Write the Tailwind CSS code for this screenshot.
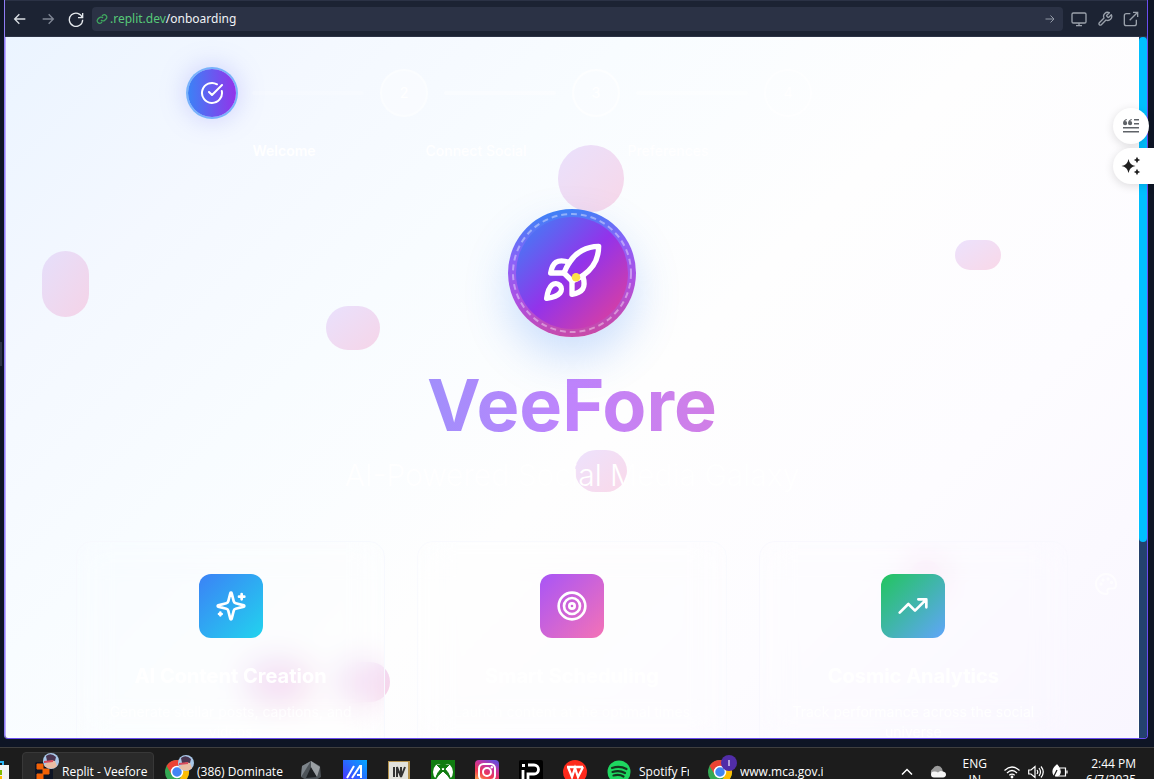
<!DOCTYPE html>
<html lang="en">
<head>
<meta charset="utf-8">
<title>VeeFore Onboarding</title>
<script src="https://cdn.jsdelivr.net/npm/@tailwindcss/browser@4"></script>
</head>
<body class="flex h-screen flex-col overflow-hidden bg-[#0e1525] font-['Inter',sans-serif]">
<div class="relative flex min-h-0 flex-1 pr-[6px] pb-2 pl-1">
  <div class="absolute top-[342px] left-0 h-6 w-[2px] bg-[#2b3245]"></div>
  <div class="flex min-w-0 flex-1 flex-col overflow-hidden rounded-b border-x border-b border-[#6a4df0] border-l-[#8f7cf5]">
    <header class="flex h-[37px] shrink-0 items-center border-t border-b border-[#2b3245] bg-[#1c2333] pr-2 pl-[7px] text-[#c2c8cc]">
      <button aria-label="Back" class="mr-3 flex size-4 items-center justify-center text-[#d8dde2]"><svg class="size-4" viewBox="0 0 24 24" fill="none" stroke="currentColor" stroke-width="2"><path d="M20 12H4m7-7-7 7 7 7"/></svg></button>
      <button aria-label="Forward" class="mr-3 flex size-4 items-center justify-center text-[#7f8694]"><svg class="size-4" viewBox="0 0 24 24" fill="none" stroke="currentColor" stroke-width="2"><path d="M4 12h16m-7-7 7 7-7 7"/></svg></button>
      <button aria-label="Reload" class="mr-2 flex size-4 items-center justify-center text-[#e4e8ec]"><svg class="size-4" viewBox="0 0 24 24" fill="none" stroke="currentColor" stroke-width="2"><path d="M22 3v7h-7M21.5 10A10 10 0 1 0 22 13"/></svg></button>
      <div class="flex h-6 min-w-0 flex-1 items-center rounded bg-[#2b3245] px-1 font-['Noto_Sans',sans-serif] text-xs">
        <svg class="mr-[2px] size-3 text-[#3fa85f]" viewBox="0 0 24 24" fill="none" stroke="currentColor" stroke-width="2.5"><path d="M10 14a5 5 0 0 0 7.500.5l3-3a5 5 0 0 0-7-7L12 6M14 10a5 5 0 0 0-7.500-.5l-3 3a5 5 0 0 0 7 7L12 18"/></svg>
        <span class="text-[#57c878]">.replit.dev</span><span class="text-[#f0f3f5]">/onboarding</span>
        <button aria-label="Go" class="mr-[3px] ml-auto text-[#9299a6]"><svg class="size-3" viewBox="0 0 24 24" fill="none" stroke="currentColor" stroke-width="2"><path d="M3 12h17m-7-7 7 7-7 7"/></svg></button>
      </div>
      <div class="ml-2 flex gap-[10px] text-[#9aa1ab]">
        <button aria-label="Device preview"><svg class="size-4" viewBox="0 0 24 24" fill="none" stroke="currentColor" stroke-width="2"><rect x="1.500" y="3" width="21" height="15" rx="2"/><path d="M12 18v4M7.500 22h9"/></svg></button>
        <button aria-label="Developer tools"><svg class="size-4" viewBox="0 0 24 24" fill="none" stroke="currentColor" stroke-width="2" stroke-linejoin="round"><path d="M14.700 6.300a1 1 0 0 0 0 1.400l1.600 1.600a1 1 0 0 0 1.400 0l3.800-3.800a6 6 0 0 1-8 8l-7 7a2.100 2.100 0 0 1-3-3l7-7a6 6 0 0 1 8-8z"/></svg></button>
        <button aria-label="Open in new tab"><svg class="size-4" viewBox="0 0 24 24" fill="none" stroke="currentColor" stroke-width="2"><path d="M20 13v6a3 3 0 0 1-3 3H5a3 3 0 0 1-3-3V7a3 3 0 0 1 3-3h6M15 2h7v7M22 2 10 14"/></svg></button>
      </div>
    </header>

    <div class="flex min-h-0 flex-1">
      <main class="relative min-w-0 flex-1 overflow-hidden border-x border-l-[#b9adff] border-r-white bg-[linear-gradient(135deg,#ebf4ff_0%,#f4f8ff_18%,#f8fcff_34%,#fefefe_54%,#fdfcff_75%,#f9f6ff_100%)]">
        <!-- floating decorations -->
        <div class="absolute top-[108px] left-[552px] h-[67px] w-[66px] rounded-full bg-linear-to-br from-[#e9e1fd] to-[#f8d7e8]"></div>
        <div class="absolute top-[214px] left-[36px] h-[66px] w-[47px] rounded-full bg-linear-to-br from-[#e5dffb] to-[#f5d3e7]"></div>
        <div class="absolute top-[269px] left-[320px] h-[44px] w-[54px] rounded-full bg-linear-to-br from-[#e9e1fd] to-[#f6d5e8]"></div>
        <div class="absolute top-[203px] left-[949px] h-[30px] w-[46px] rounded-full bg-linear-to-br from-[#ece2fd] to-[#f9d8e8]"></div>
        <div class="absolute top-[413px] left-[569px] h-[42px] w-[52px] rounded-full bg-linear-to-br from-[#ede2fd] to-[#fad9e9]"></div>
        <div class="absolute top-[624px] left-[239px] h-[42px] w-[66px] rounded-full bg-linear-to-br from-[#ece0fc] to-[#f8d4e8]"></div>
        <div class="absolute top-[625px] left-[332px] h-[40px] w-[52px] rounded-full bg-linear-to-br from-[#ece0fc] to-[#f8d4e8]"></div>
        <div class="absolute top-[523px] left-[904px] size-8 rounded-full bg-linear-to-br from-[#f6e6fc] to-[#fbdcec]"></div>
        <svg class="absolute top-[535px] left-[1088px] size-6 text-white/70" viewBox="0 0 24 24" fill="none" stroke="currentColor" stroke-width="2"><path d="M12 2a10 10 0 0 0 0 20c1.500 0 2-1 1.600-2-.8-1.700.2-3.500 2-3.500H19c2 0 3-1.800 3-4C22 6.500 17.500 2 12 2z"/><circle cx="7" cy="12" r=".7"/><circle cx="9" cy="8" r=".7"/><circle cx="14" cy="7" r=".7"/><circle cx="17.500" cy="10.500" r=".7"/></svg>

        <div class="relative pt-8">
          <ol class="mx-auto grid max-w-3xl grid-cols-4 text-center text-sm font-medium text-white">
            <li>
              <div class="flex items-center gap-4">
                <span class="flex size-12 shrink-0 items-center justify-center rounded-full bg-linear-to-r/srgb from-[#3b82f6] to-[#9333ea] shadow-[0_0_28px_#7a80f866] ring-2 ring-[#78b2fb]"><svg class="size-6" viewBox="0 0 24 24" fill="none" stroke="currentColor" stroke-width="2" stroke-linecap="round" stroke-linejoin="round"><path d="M21.800 10A10 10 0 1 1 17 3.300M9 11l3 3L22 4"/></svg></span>
                <span class="mr-4 h-1 flex-1 rounded-full bg-white/20"></span>
              </div>
              <p class="mt-6 leading-5 font-semibold">Welcome</p>
            </li>
            <li>
              <div class="flex items-center gap-4">
                <span class="flex size-12 shrink-0 items-center justify-center rounded-full border-2 border-white/40 bg-white/30">2</span>
                <span class="mr-4 h-1 flex-1 rounded-full bg-white/40"></span>
              </div>
              <p class="mt-6 leading-5">Connect Social</p>
            </li>
            <li>
              <div class="flex items-center gap-4">
                <span class="flex size-12 shrink-0 items-center justify-center rounded-full border-2 border-white/60 bg-white/20">3</span>
                <span class="mr-4 h-1 flex-1 rounded-full bg-white/40"></span>
              </div>
              <p class="mt-6 leading-5">Preferences</p>
            </li>
            <li>
              <span class="flex size-12 items-center justify-center rounded-full border-2 border-white/60">4</span>
            </li>
          </ol>

          <section class="mx-auto mt-12 max-w-4xl text-center">
            <div class="relative mx-auto flex size-32 items-center justify-center rounded-full bg-[linear-gradient(170deg,#3b82f6_6%,#8b62f8_35%,#ac50e2_62%,#c94aa6_94%)] shadow-[0_20px_44px_#3b82f640]">
              <svg class="absolute inset-0 size-32" viewBox="0 0 128 128" fill="none"><defs><linearGradient id="core" x1="0" y1="0" x2="1" y2="1"><stop offset="0.05" stop-color="#3f80f6"/><stop offset="0.5" stop-color="#9333ea"/><stop offset="0.95" stop-color="#e0409a"/></linearGradient></defs><circle cx="64" cy="64" r="56" fill="url(#core)"/><circle cx="64" cy="64" r="59" stroke="#fff" stroke-opacity=".4" stroke-width="2" stroke-dasharray="5.900 3.980"/></svg>
              <svg class="relative size-16 text-white" viewBox="0 0 24 24" fill="none" stroke="currentColor" stroke-width="2" stroke-linecap="round" stroke-linejoin="round"><path d="M4.500 16.500c-1.500 1.260-2 5-2 5s3.740-.5 5-2c.71-.84.7-2.130-.09-2.910a2.180 2.180 0 0 0-2.910-.09z"/><path d="m12 15-3-3a22 22 0 0 1 2-3.950A12.880 12.880 0 0 1 22 2c0 2.720-.78 7.500-6 11a22.350 22.350 0 0 1-4 2z"/><path d="M9 12H4s.55-3.030 2-4c1.620-1.080 5 0 5 0"/><path d="M12 15v5s3.030-.55 4-2c1.080-1.620 0-5 0-5"/><circle cx="13.500" cy="13.600" r="1.600" fill="#fde047" stroke="none"/></svg>
            </div>
            <h1 class="mt-8 bg-linear-to-r/srgb from-[#60a5fa] via-[#c084fc] to-[#f472b6] bg-clip-text text-7xl font-bold text-transparent">VeeFore</h1>
            <p class="mt-4 text-3xl font-light text-white">AI-Powered Social Media Galaxy</p>
          </section>

          <section class="mx-auto mt-12 grid max-w-[1024px] grid-cols-3 gap-8 px-4 text-center text-white">
            <article class="h-80 rounded-2xl border border-[#f7f9fe] bg-white/10 p-8 backdrop-blur-lg">
              <div class="mx-auto flex size-16 items-center justify-center rounded-xl bg-linear-to-br/srgb from-[#3b82f6] to-[#22d3ee]"><svg class="size-8" viewBox="0 0 24 24" fill="none" stroke="currentColor" stroke-width="2" stroke-linecap="round" stroke-linejoin="round"><path d="M9.940 15.500A2 2 0 0 0 8.500 14.060l-6.140-1.580a.5.5 0 0 1 0-.96L8.500 9.940A2 2 0 0 0 9.940 8.500l1.580-6.140a.5.5 0 0 1 .96 0l1.580 6.140a2 2 0 0 0 1.440 1.440l6.140 1.580a.5.5 0 0 1 0 .96l-6.140 1.580a2 2 0 0 0-1.440 1.440l-1.580 6.140a.5.5 0 0 1-.96 0z"/><path d="M20 3v4M22 5h-4M4 17v2M5 18H3"/></svg></div>
              <h2 class="mt-6 text-xl font-bold">AI Content Creation</h2>
              <p class="mt-3 text-sm text-white/80">Generate stellar posts, captions, and videos</p>
            </article>
            <article class="h-80 rounded-2xl border border-[#f9fafe] bg-white/10 p-8 backdrop-blur-lg">
              <div class="mx-auto flex size-16 items-center justify-center rounded-xl bg-linear-to-br/srgb from-[#a855f7] to-[#f472b6]"><svg class="size-8" viewBox="0 0 24 24" fill="none" stroke="currentColor" stroke-width="2"><circle cx="12" cy="12" r="10"/><circle cx="12" cy="12" r="6"/><circle cx="12" cy="12" r="2"/></svg></div>
              <h2 class="mt-6 text-xl font-bold">Smart Scheduling</h2>
              <p class="mt-3 text-sm text-white/80">Launch content at the optimal times</p>
            </article>
            <article class="h-80 rounded-2xl border border-[#f9f8fe] bg-white/10 p-8 backdrop-blur-lg">
              <div class="mx-auto flex size-16 items-center justify-center rounded-xl bg-linear-to-br/srgb from-[#22c55e] to-[#60a5fa]"><svg class="size-8" viewBox="0 0 24 24" fill="none" stroke="currentColor" stroke-width="2" stroke-linecap="round" stroke-linejoin="round"><path d="M22 7 13.500 15.500 8.500 10.500 2 17M16 7h6v6"/></svg></div>
              <h2 class="mt-6 text-xl font-bold">Cosmic Analytics</h2>
              <p class="mt-3 text-sm text-white/90">Track performance across the social universe</p>
            </article>
          </section>
        </div>
      </main>
      <div class="w-2 shrink-0 bg-[#24426e]"><div class="h-[72%] rounded bg-[#00bfff]"></div></div>
    </div>
  </div>

  <button aria-label="Reader" class="absolute top-[108px] right-[5px] flex size-9 items-center justify-center rounded-full bg-white text-[#5f6368] shadow-[0_2px_10px_#00000022]"><svg class="size-4" viewBox="0 0 16 16" fill="currentColor"><path d="M3.800 1C1.500 1.500 0 3 0 5.200a2.100 2.100 0 1 0 2.100-2.100c.2-.5.900-.9 1.700-1.100zM8.800 1C6.500 1.500 5 3 5 5.200a2.100 2.100 0 1 0 2.100-2.100c.2-.5.900-.9 1.700-1.100zM11 1h5v1.500h-5zM11 5h5v1.500h-5zM0 9h16v1.500H0zM0 13h16v1.500H0z"/></svg></button>
  <button aria-label="Assistant" class="absolute top-[148px] right-0 flex h-9 w-[41px] items-center rounded-l-full bg-white pl-2 text-[#1f1f1f] shadow-[0_2px_10px_#00000022]"><svg class="size-5" viewBox="0 0 20 20" fill="currentColor"><path d="M7.500 3Q8.500 9 14.500 10 8.500 11 7.500 17 6.500 11 .5 10 6.500 9 7.500 3zM16 .8Q16.500 3.500 19.200 4 16.500 4.500 16 7.200 15.500 4.500 12.800 4 15.500 3.500 16 .8zM16 12.800Q16.500 15.500 19.200 16 16.500 16.500 16 19.200 15.500 16.500 12.800 16 15.500 15.500 16 12.800z"/></svg></button>
</div>

<footer class="h-8 shrink-0 overflow-hidden border-t border-[#3f3f3f] bg-[#1c1c1c] font-['Open_Sans','Noto_Sans',sans-serif] text-xs text-white">
  <div class="flex h-12 items-center">
    <button aria-label="Store" class="mr-[13px] w-[9px] shrink-0"><svg class="h-6 w-[9px]" viewBox="0 0 9 24"><path d="M0 2h3v4" fill="none" stroke="#29b6f6" stroke-width="2"/><path d="M0 5h9v19H0z" fill="#f3f3f3"/><path d="M0 10h2v5H0z" fill="#7fba00"/><path d="M0 16h2v5H0z" fill="#ffb900"/></svg></button>
    <button class="mr-[11px] flex h-10 w-[132px] shrink-0 items-center rounded border border-[#383838] bg-[#2a2a2a] pl-3 whitespace-nowrap">
      <svg class="mr-px h-9 w-[26px] shrink-0 overflow-visible" viewBox="0 0 26 36"><rect y="8" width="18" height="24" rx="2" fill="#0e1525"/><path d="M2 10h6v5H2zM8 15h6v5H8zM2 20h6v5H2z" fill="#f26207" stroke="#f26207"/><circle cx="16" cy="7" r="8" fill="#a9c7e8"/><path d="M11 2q5-4 10 1l-1 4h-8z" fill="#4a3550"/><path d="M9 12q5-7 11-5l2 5q-5 5-13 0z" fill="#e9bda5"/><path d="M9 7l9-1v2l-9 1z" fill="#d94a5b"/></svg>
      <span>Replit - Veefore</span>
    </button>
    <button class="mr-4 flex w-[118px] shrink-0 items-center whitespace-nowrap">
      <svg class="mr-1 h-9 w-7 shrink-0 overflow-visible" viewBox="0 0 28 36"><circle cx="12" cy="18" r="12" fill="#34a853"/><path d="M1.600 12A12 12 0 0 1 22.400 12H12L7 21z" fill="#ea4335"/><path d="M22.400 12A12 12 0 0 1 12 30l5-9-1-9z" fill="#fbbc04"/><circle cx="12" cy="18" r="5.500" fill="#4285f4" stroke="#fff" stroke-width="1.500"/><circle cx="21" cy="9" r="8" fill="#a9c7e8"/><path d="M16 4q5-4 10 1l-1 4h-8z" fill="#4a3550"/><path d="M14 14q5-7 11-5l2 5q-5 5-13 0z" fill="#e9bda5"/><path d="M14 9l9-1v2l-9 1z" fill="#d94a5b"/></svg>
      <span>(386) Dominate</span>
    </button>
    <div class="mr-2 flex shrink-0 gap-5">
      <button aria-label="Armoury"><svg class="size-6" viewBox="0 0 24 24"><path d="M12 1 21 6l1 11-10 6L2 17 3 6z" fill="#4d5358"/><path d="M12 1 3 6 2 17 12 1z" fill="#7d848a"/><path d="m12 7 6 10-11 1z" fill="#1e2124"/><path d="m12 7 6 10 3-10-9-6z" fill="#9a9fa3"/></svg></button>
      <button aria-label="Asus"><svg class="size-6" viewBox="0 0 24 24"><defs><linearGradient id="asus" x1="0" y1="1" x2="1" y2="0"><stop stop-color="#5227ff"/><stop offset="1" stop-color="#00a8ff"/></linearGradient></defs><path fill="url(#asus)" d="M0 0h24v24H0z"/><path d="m4 18 7-12M9 18l8-12h1v12M14 15h4" stroke="#fff" stroke-width="2" fill="none"/></svg></button>
      <button aria-label="Game"><svg class="size-6" viewBox="0 0 24 24"><path fill="#b4924c" d="M1 1h22v23H1z"/><path fill="#e2e2dc" d="M2 2h19v22H2z"/><path d="M7 7v10M10 17V7l4 10V7M14 17l4-10" stroke="#333" stroke-width="2" fill="none"/></svg></button>
      <button aria-label="Xbox"><svg class="size-6" viewBox="0 0 24 24"><path fill="#107c10" d="M0 0h24v24H0z"/><circle cx="12" cy="12" r="10" fill="#fff"/><path d="M4 20Q6 12 12 7q6 5 8 13-3-5-8-9-5 4-8 9zM5 4q3-1 7 2 4-3 7-2-3-3-7-3T5 4zM6 5l6 6 6-6" fill="#107c10" stroke="#107c10"/></svg></button>
      <button aria-label="Instagram"><svg class="size-6" viewBox="0 0 24 24"><defs><linearGradient id="insta" x1=".2" y1="1" x2=".7" y2="0"><stop stop-color="#ffc04a"/><stop offset=".4" stop-color="#f0384f"/><stop offset=".75" stop-color="#c135a5"/><stop offset="1" stop-color="#6a4ad8"/></linearGradient></defs><rect width="24" height="24" rx="4" fill="url(#insta)"/><g fill="none" stroke="#fff" stroke-width="2"><rect x="4" y="4" width="16" height="16" rx="4.500"/><circle cx="12" cy="12" r="4"/></g><circle cx="16.800" cy="7.300" r="1.200" fill="#fff"/></svg></button>
      <button aria-label="Pi"><svg class="size-6" viewBox="0 0 24 24"><rect width="24" height="24" rx="2"/><path d="M9 5h6a4.500 4.500 0 0 1 0 9H9v6M4 10v10" fill="none" stroke="#fff" stroke-width="2.800"/><path d="M3 4h3v3H3z" fill="#fff"/></svg></button>
      <button aria-label="WPS"><svg class="size-6" viewBox="0 0 24 24"><circle cx="12" cy="12" r="12" fill="#fc2a1c"/><path d="M4 7h16M5 7l4 10 3-9 3 9 5-10" fill="none" stroke="#fff" stroke-width="2.300"/></svg></button>
      <button aria-label="Spotify"><svg class="size-6" viewBox="0 0 24 24"><circle cx="12" cy="12" r="11.500" fill="#1ed760"/><path d="M5 8q8-2.500 14.500 1M5.500 12q7-2 12.500 1M6.500 15.500q6-1.500 10 1" fill="none" stroke="#14351f" stroke-width="2.200" stroke-linecap="round"/></svg></button>
    </div>
    <span class="mr-[19px] w-[50px] shrink-0 overflow-hidden whitespace-nowrap">Spotify Free</span>
    <button class="flex w-[115px] shrink-0 items-center whitespace-nowrap">
      <svg class="mr-1 h-9 w-7 shrink-0 overflow-visible" viewBox="0 0 28 36"><circle cx="12" cy="18" r="12" fill="#34a853"/><path d="M1.600 12A12 12 0 0 1 22.400 12H12L7 21z" fill="#ea4335"/><path d="M22.400 12A12 12 0 0 1 12 30l5-9-1-9z" fill="#fbbc04"/><circle cx="12" cy="18" r="5.500" fill="#4285f4" stroke="#fff" stroke-width="1.500"/><circle cx="21" cy="9" r="8" fill="#512da8"/><path d="M21 6v6" stroke="#d5c8f0" stroke-width="1.500"/></svg>
      <span class="overflow-hidden">www.mca.gov.in</span>
    </button>
    <div class="mr-[18px] ml-auto flex items-center">
      <button aria-label="Hidden icons" class="mr-[17px]"><svg class="size-3" viewBox="0 0 12 12" fill="none" stroke="#fff" stroke-width="1.500"><path d="m1 8.500 5-5 5 5"/></svg></button>
      <svg class="mr-[17px] size-4" viewBox="0 0 16 16"><path d="M4 12a4 4 0 0 1-1-7.500 5 5 0 0 1 9 0l2 7z" fill="#9b9b9b"/><path d="M4 13.500a3 3 0 0 1 0-6q2-.5 4 1a4 4 0 0 1 5-1q3 .5 3 3t-3 3z" fill="#f4f4f4"/></svg>
      <span class="mr-[17px] text-center leading-4">ENG<br>IN</span>
      <svg class="mr-2 size-4" viewBox="0 0 16 16" fill="none" stroke="#fff" stroke-width="1.200"><path d="M.5 6.500q7.500-7 15 0M3 9q5-5 10 0M5.300 11.300q2.700-2.500 5.400 0"/><circle cx="8" cy="13" r=".8" fill="#fff"/></svg>
      <svg class="mr-2 size-4" viewBox="0 0 16 16" fill="none" stroke="#fff" stroke-width="1.200"><path d="M.7 6H3l4-3.500v11L3 10H.7zM9 6q1.500 2 0 4M11 4q3 4 0 8M13 2.500q4.500 5.500 0 11"/></svg>
      <svg class="mr-[18px] size-4" viewBox="0 0 16 16" fill="none" stroke="#fff" stroke-width="1.200"><path d="M8 4h5.500v8H3M15 6.500v3"/><path d="M5 1q4 4 3 8t-6 2Q-1 6 5 1z" fill="#fff"/><path d="M1 14 5 6" stroke="#1c1c1c"/></svg>
      <span class="text-right leading-4">2:44 PM<br>6/7/2025</span>
    </div>
  </div>
</footer>
</body>
</html>
